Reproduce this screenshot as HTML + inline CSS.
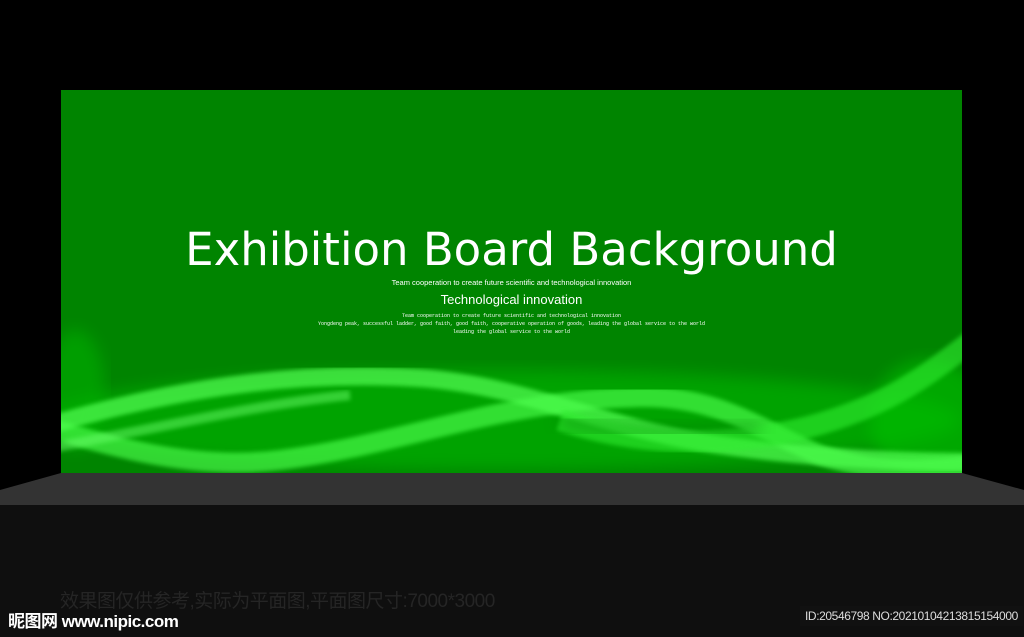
<!DOCTYPE html>
<html><head><meta charset="utf-8"><style>
body{margin:0;width:1024px;height:637px;background:#000;position:relative;overflow:hidden;font-family:"Liberation Sans","Noto Sans CJK SC",sans-serif}
.t{position:absolute;left:61px;width:901px;text-align:center;color:#fff}
</style></head><body>
<div style="position:absolute;left:0;top:505px;width:1024px;height:132px;background:#0f0f0f"></div>
<svg style="position:absolute;left:0;top:0" width="1024" height="637">
<defs>
<filter id="b"><feGaussianBlur stdDeviation="8"/></filter>
<filter id="b2"><feGaussianBlur stdDeviation="2"/></filter>
<clipPath id="c"><rect x="61" y="90" width="901" height="383"/></clipPath>
</defs>
<polygon points="61,473 962,473 1024,490 1024,505 0,505 0,490" fill="#333"/>
<rect x="61" y="90" width="901" height="383" fill="#008400"/>
<g clip-path="url(#c)">
<ellipse cx="500" cy="420" rx="460" ry="50" fill="#00b800" opacity="0.6" filter="url(#b)"/>
<ellipse cx="930" cy="420" rx="60" ry="60" fill="#00c000" opacity="0.6" filter="url(#b)"/>
<ellipse cx="75" cy="390" rx="30" ry="60" fill="#00b000" opacity="0.6" filter="url(#b)"/>
<path d="M40,428 C200,380 320,372 420,378 C520,385 600,425 700,442 C800,458 900,462 980,462" stroke="#55ff55" stroke-width="18" fill="none" opacity="0.7" filter="url(#b2)"/>
<path d="M40,425 C120,450 200,470 280,460 C400,445 500,400 640,397 C720,396 760,430 820,455 C880,475 930,470 980,465" stroke="#4dff4d" stroke-width="20" fill="none" opacity="0.65" filter="url(#b2)"/>
<path d="M560,420 C650,450 760,450 860,410 C910,390 940,365 980,335" stroke="#33ee33" stroke-width="22" fill="none" opacity="0.6" filter="url(#b2)"/>
<path d="M40,450 C150,430 250,405 350,395" stroke="#6aff6a" stroke-width="10" fill="none" opacity="0.5" filter="url(#b2)"/>
<path d="M560,420 C650,440 700,430 760,430" stroke="#006e00" stroke-width="10" fill="none" opacity="0.5" filter="url(#b)"/>
</g>
</svg>
<div class="t" style="top:223px;font-size:45px;font-family:'DejaVu Sans',sans-serif">Exhibition Board Background</div>
<div class="t" style="top:278px;font-size:7.5px">Team cooperation to create future scientific and technological innovation</div>
<div class="t" style="top:292px;font-size:13px">Technological innovation</div>
<div class="t" style="top:312px;font-size:5px;font-family:'Liberation Mono',monospace;line-height:8px">Team cooperation to create future scientific and technological innovation<br>Yongdeng peak, successful ladder, good faith, good faith, cooperative operation of goods, leading the global service to the world<br>leading the global service to the world</div>
<div style="position:absolute;left:60px;top:586px;font-size:19px;color:#252525;letter-spacing:-0.5px">效果图仅供参考,实际为平面图,平面图尺寸:7000*3000</div>
<div style="position:absolute;left:8px;top:607px;font-size:17px;color:#fff;font-weight:bold;letter-spacing:-0.5px">昵图网 www.nipic.com</div>
<div style="position:absolute;left:800px;top:606px;padding:3px 5px;background:#111;font-size:12px;color:#ddd;white-space:nowrap;letter-spacing:-0.4px">ID:20546798 NO:20210104213815154000</div>
</body></html>
